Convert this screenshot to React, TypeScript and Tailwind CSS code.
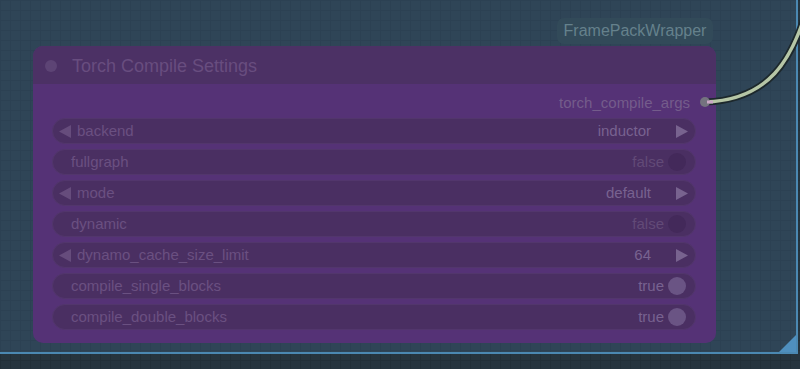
import React from "react";

type W =
  | { kind: "combo"; label: string; value: string }
  | { kind: "toggle"; label: string; on: boolean };

const widgets: W[] = [
  { kind: "combo", label: "backend", value: "inductor" },
  { kind: "toggle", label: "fullgraph", on: false },
  { kind: "combo", label: "mode", value: "default" },
  { kind: "toggle", label: "dynamic", on: false },
  { kind: "combo", label: "dynamo_cache_size_limit", value: "64" },
  { kind: "toggle", label: "compile_single_blocks", on: true },
  { kind: "toggle", label: "compile_double_blocks", on: true },
];

function LeftArrow() {
  return (
    <svg width="12" height="13" viewBox="0 0 12 13" className="shrink-0">
      <polygon points="12,0 12,13 0,6.5" fill="#664c7c" />
    </svg>
  );
}
function RightArrow() {
  return (
    <svg width="12" height="13" viewBox="0 0 12 13" className="shrink-0">
      <polygon points="0,0 0,13 12,6.5" fill="#78638f" />
    </svg>
  );
}

function Widget({ w }: { w: W }) {
  if (w.kind === "combo") {
    return (
      <div className="h-[26px] rounded-full bg-[#4a2f62] border border-[#52366c] flex items-center pl-[6px] pr-[7px]">
        <LeftArrow />
        <span className="ml-[6px] text-[15px] text-[#6a5081]">{w.label}</span>
        <span className="ml-auto text-[15px] text-[#786290]">{w.value}</span>
        <span className="ml-[25px]">
          <RightArrow />
        </span>
      </div>
    );
  }
  return (
    <div className="h-[26px] rounded-full bg-[#4a2f62] border border-[#52366c] flex items-center pl-[18px] pr-[9px]">
      <span className="text-[15px] text-[#6a5081]">{w.label}</span>
      <span
        className={
          w.on
            ? "ml-auto text-[15px] text-[#786290]"
            : "ml-auto text-[15px] text-[#624a77]"
        }
      >
        {w.on ? "true" : "false"}
      </span>
      <span
        className={
          w.on
            ? "ml-[4px] w-[18px] h-[18px] rounded-full bg-[#6a5484]"
            : "ml-[4px] w-[18px] h-[18px] rounded-full bg-[#43295a]"
        }
      />
    </div>
  );
}

export default function App() {
  return (
    <div
      className="relative w-[800px] h-[369px] overflow-hidden bg-[#26343e] bg-[linear-gradient(#222f38_1px,transparent_1px),linear-gradient(90deg,#222f38_1px,transparent_1px)] bg-[size:10px_10px]"
      style={{ fontFamily: '"Liberation Sans", Arial, sans-serif' }}
    >
      {/* group area */}
      <div className="absolute left-0 top-0 w-[798px] h-[354px] bg-[#2f4557] bg-[linear-gradient(#2c4153_1px,transparent_1px),linear-gradient(90deg,#2c4153_1px,transparent_1px)] bg-[size:10px_10px] border-r-2 border-b-2 border-[#4b88b2]">
        <svg className="absolute right-0 bottom-0" width="17" height="17" viewBox="0 0 17 17">
          <polygon points="17,0 17,17 0,17" fill="#4f8fbe" />
        </svg>
      </div>

      {/* FramePackWrapper title badge */}
      <div className="absolute left-[557px] top-[18px] w-[156px] h-[26px] rounded-[7px] bg-[#324a59] flex items-center justify-center text-[16px] text-[#65818c]">
        FramePackWrapper
      </div>

      {/* node */}
      <div className="absolute left-[33px] top-[46px] w-[683px] h-[297px] rounded-[10px] bg-[#553276] flex flex-col">
        <div className="h-[38px] rounded-t-[10px] bg-[#4c3165] flex items-center pl-[12px] pt-[2px]">
          <span className="w-[12px] h-[12px] rounded-full bg-[#5d4475]" />
          <span className="ml-[15px] text-[18px] text-[#684d7f]">Torch Compile Settings</span>
        </div>
        <div className="h-[34px] flex items-center justify-end pr-[26px] pt-[4px]">
          <span className="text-[15px] text-[#745c8b]">torch_compile_args</span>
        </div>
        <div className="flex flex-col gap-[5px] pl-[19px] pr-[20px]">
          {widgets.map((w) => (
            <Widget key={w.label} w={w} />
          ))}
        </div>
      </div>

      {/* link */}
      <svg className="absolute left-0 top-0" width="800" height="369" viewBox="0 0 800 369">
        <path d="M705 102 C770 100 792 58 806 12" fill="none" stroke="#1d282c" strokeWidth="7" />
        <path d="M705 102 C770 100 792 58 806 12" fill="none" stroke="#b6c6a6" strokeWidth="3.5" />
        <circle cx="705" cy="102" r="5" fill="#74737f" />
        <rect x="707" y="100.5" width="6" height="3" fill="#caa6c6" />
      </svg>
    </div>
  );
}
